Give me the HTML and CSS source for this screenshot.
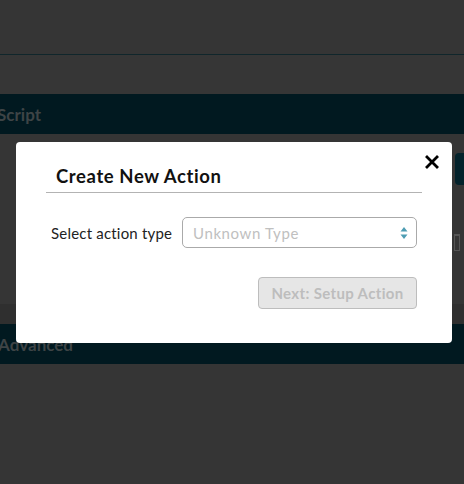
FILE: index.html
```html
<!DOCTYPE html>
<html>
<head>
<meta charset="utf-8">
<link rel="stylesheet" href="styles.css">
</head>
<body>
<div class="page">
  <div class="topbar"></div>
  <div class="gap"></div>
  <div class="section-bar"><span class="section-title script">Script</span></div>
  <div class="section-body">
    <div class="side-btn"></div>
    <div class="side-icon"></div>
  </div>
  <div class="section-foot"></div>
  <div class="section-bar"><span class="section-title adv">Advanced</span></div>
</div>

<div class="modal">
  <button class="close" aria-label="Close">
    <svg width="14" height="14" viewBox="0 0 14 14"><path d="M2 2 L12 12 M12 2 L2 12" stroke="#000" stroke-width="2.8" stroke-linecap="square"/></svg>
  </button>
  <div class="modal-head">
    <h2 class="modal-title">Create New Action</h2>
  </div>
  <div class="form-row">
    <label class="form-label">Select action type</label>
    <div class="select">
      <span class="select-text">Unknown Type</span>
      <svg class="select-arrows" width="8" height="14" viewBox="0 0 8 14"><path d="M4 1 L7.5 5.5 H0.5 Z M4 13 L7.5 8.5 H0.5 Z" fill="#4e9db3"/></svg>
    </div>
  </div>
  <div class="actions">
    <button class="next-btn" disabled>Next: Setup Action</button>
  </div>
</div>
</body>
</html>
```
FILE: styles.css
```css
html, body {
  margin: 0;
  padding: 0;
}
body {
  background: #353535;
  width: 464px;
  height: 484px;
  overflow: hidden;
  position: relative;
  font-family: Lato, "Open Sans", sans-serif;
}
.page {
  display: flex;
  flex-direction: column;
}
.topbar {
  height: 54px;
  border-bottom: 1px solid #10262b;
  background: #353535;
}
.gap {
  height: 39px;
  background: #363636;
}
.section-bar {
  height: 40px;
  background: #011920;
  display: flex;
  align-items: center;
  overflow: hidden;
}
.section-title {
  font-weight: 700;
  font-size: 17px;
  color: #3e4446;
}
.script { margin-left: -3px; }
.adv { margin-left: -2px; }
.section-body {
  height: 170px;
  background: #353535;
  position: relative;
}
.side-btn {
  position: absolute;
  left: 455px;
  top: 19px;
  width: 20px;
  height: 32px;
  border-radius: 4px;
  background: #03222b;
}
.side-icon {
  position: absolute;
  left: 454px;
  top: 100px;
  width: 4px;
  height: 14px;
  border: 1px solid #555;
  border-top-width: 2px;
}
.section-foot {
  height: 20px;
  background: #2f2f2f;
}
.modal {
  position: absolute;
  left: 16px;
  top: 142px;
  width: 436px;
  height: 201px;
  background: #fff;
  border-radius: 4px;
  box-sizing: border-box;
  display: flex;
  flex-direction: column;
}
.close {
  position: absolute;
  right: 13px;
  top: 13px;
  width: 14px;
  height: 14px;
  padding: 0;
  border: 0;
  background: none;
  display: flex;
}
.modal-head {
  margin: 19px 30px 0 30px;
  padding: 0 0 0 10px;
  border-bottom: 1px solid #b3b3b3;
}
.modal-title {
  margin: 0;
  font-size: 18.5px;
  font-weight: 700;
  color: #111;
  line-height: 31px;
  letter-spacing: 0.6px;
}
.form-row {
  display: flex;
  align-items: center;
  margin: 24px 35px 0 35px;
}
.form-label {
  font-size: 15px;
  color: #222;
  width: 131px;
  letter-spacing: 0.2px;
}
.select {
  flex: 1;
  height: 31px;
  box-sizing: border-box;
  border: 1px solid #aaa;
  border-radius: 5px;
  display: flex;
  align-items: center;
  justify-content: space-between;
  padding: 0 8px 0 10px;
}
.select-text {
  font-size: 15px;
  color: #c0c0c0;
  letter-spacing: 0.6px;
}
.actions {
  display: flex;
  justify-content: flex-end;
  margin: 29px 35px 0 35px;
}
.next-btn {
  width: 159px;
  height: 32px;
  box-sizing: border-box;
  background: #e6e6e6;
  border: 1px solid #bdbdbd;
  border-radius: 4px;
  color: #bdbdbd;
  font-family: Lato, "Open Sans", sans-serif;
  font-weight: 700;
  font-size: 15px;
  letter-spacing: 0.35px;
  padding: 0;
}
```
